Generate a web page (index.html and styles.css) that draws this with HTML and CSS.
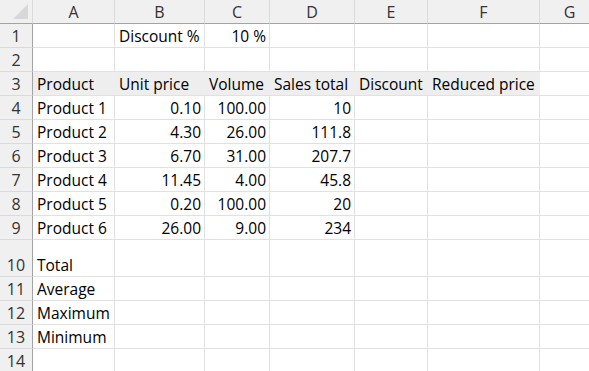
FILE: index.html
```html
<!DOCTYPE html>
<html>
<head>
<meta charset="utf-8">
<link rel="stylesheet" href="styles.css">
</head>
<body>
<div class="sheet">
  <div class="hd corner"><span class="tri"></span></div>
  <div class="hd col">A</div><div class="hd col">B</div><div class="hd col">C</div><div class="hd col">D</div><div class="hd col">E</div><div class="hd col">F</div><div class="hd col">G</div>

  <div class="hd row">1</div><div class="c"></div><div class="c">Discount %</div><div class="c r">10 %</div><div class="c"></div><div class="c"></div><div class="c"></div><div class="c"></div>

  <div class="hd row">2</div><div class="c"></div><div class="c"></div><div class="c"></div><div class="c"></div><div class="c"></div><div class="c"></div><div class="c"></div>

  <div class="hd row">3</div><div class="c fill">Product</div><div class="c fill">Unit price</div><div class="c fill">Volume</div><div class="c fill">Sales total</div><div class="c fill">Discount</div><div class="c fill">Reduced price</div><div class="c"></div>

  <div class="hd row">4</div><div class="c">Product 1</div><div class="c r">0.10</div><div class="c r">100.00</div><div class="c r">10</div><div class="c"></div><div class="c"></div><div class="c"></div>
  <div class="hd row">5</div><div class="c">Product 2</div><div class="c r">4.30</div><div class="c r">26.00</div><div class="c r">111.8</div><div class="c"></div><div class="c"></div><div class="c"></div>
  <div class="hd row">6</div><div class="c">Product 3</div><div class="c r">6.70</div><div class="c r">31.00</div><div class="c r">207.7</div><div class="c"></div><div class="c"></div><div class="c"></div>
  <div class="hd row">7</div><div class="c">Product 4</div><div class="c r">11.45</div><div class="c r">4.00</div><div class="c r">45.8</div><div class="c"></div><div class="c"></div><div class="c"></div>
  <div class="hd row">8</div><div class="c">Product 5</div><div class="c r">0.20</div><div class="c r">100.00</div><div class="c r">20</div><div class="c"></div><div class="c"></div><div class="c"></div>
  <div class="hd row">9</div><div class="c">Product 6</div><div class="c r">26.00</div><div class="c r">9.00</div><div class="c r">234</div><div class="c"></div><div class="c"></div><div class="c"></div>

  <div class="hd row">10</div><div class="c">Total</div><div class="c"></div><div class="c"></div><div class="c"></div><div class="c"></div><div class="c"></div><div class="c"></div>
  <div class="hd row">11</div><div class="c">Average</div><div class="c"></div><div class="c"></div><div class="c"></div><div class="c"></div><div class="c"></div><div class="c"></div>
  <div class="hd row">12</div><div class="c">Maximum</div><div class="c"></div><div class="c"></div><div class="c"></div><div class="c"></div><div class="c"></div><div class="c"></div>
  <div class="hd row">13</div><div class="c">Minimum</div><div class="c"></div><div class="c"></div><div class="c"></div><div class="c"></div><div class="c"></div><div class="c"></div>
  <div class="hd row">14</div><div class="c"></div><div class="c"></div><div class="c"></div><div class="c"></div><div class="c"></div><div class="c"></div><div class="c"></div>
</div>
</body>
</html>
```

FILE: styles.css
```css
html, body {
  margin: 0;
  padding: 0;
  background: #ffffff;
  overflow: hidden;
}

.sheet {
  display: grid;
  grid-template-columns: 33px 82px 90px 65px 85px 73px 112px 60px;
  grid-template-rows: 24px repeat(9, 24px) 37px 24px 24px 24px 24px;
  width: 600px;
  font-family: "Open Sans", "Noto Sans", sans-serif;
  font-size: 15.5px;
  color: #000000;
}

.c {
  box-sizing: border-box;
  border-right: 1px solid #e1e1e1;
  border-bottom: 1px solid #e1e1e1;
  padding: 0 3px 0 4px;
  display: flex;
  align-items: flex-end;
  line-height: 22px;
  white-space: nowrap;
  overflow: visible;
}

.c.r {
  justify-content: flex-end;
}

.c.fill {
  background: #eeeeee;
  border-right-color: #eeeeee;
}

.hd {
  box-sizing: border-box;
  background: #f0f0f0;
  color: #333333;
  display: flex;
  justify-content: center;
  align-items: flex-end;
  line-height: 22px;
  font-size: 16px;
}

.hd.col {
  border-right: 1px solid #dadada;
  border-bottom: 1px solid #a3a3a3;
}

.hd.corner {
  border-right: 1px solid #dadada;
  border-bottom: 1px solid #a3a3a3;
  position: relative;
}

.tri {
  position: absolute;
  right: 4px;
  bottom: 4px;
  width: 0;
  height: 0;
  border-style: solid;
  border-width: 0 0 15px 15px;
  border-color: transparent transparent #d8d8d8 transparent;
}

.hd.row {
  border-right: 1px solid #a3a3a3;
  border-bottom: 1px solid #dadada;
}
```
